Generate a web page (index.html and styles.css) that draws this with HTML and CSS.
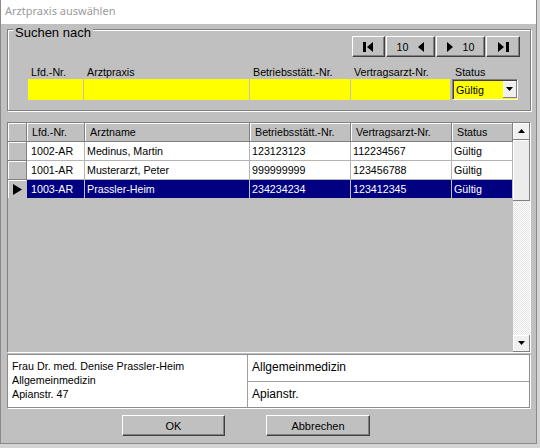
FILE: index.html
```html
<!DOCTYPE html>
<html lang="de">
<head>
<meta charset="utf-8">
<title>Arztpraxis auswählen</title>
<link rel="stylesheet" href="styles.css">
</head>
<body>
<div class="window">
  <div class="titlebar">Arztpraxis auswählen</div>
  <div class="content">
    <div class="groupbox">
      <span class="legend">Suchen nach</span>
      <div class="navrow">
        <div class="nbtn w-first">
          <svg width="11" height="10" viewBox="0 0 11 10"><rect x="0" y="0" width="3" height="10" fill="#000"/><polygon points="10,0 4,5 10,10" fill="#000"/></svg>
        </div>
        <div class="nbtn w-prev">
          <span>10</span>
          <svg width="6" height="10" viewBox="0 0 6 10"><polygon points="6,0 0,5 6,10" fill="#000"/></svg>
        </div>
        <div class="nbtn w-next">
          <svg width="6" height="10" viewBox="0 0 6 10"><polygon points="0,0 6,5 0,10" fill="#000"/></svg>
          <span>10</span>
        </div>
        <div class="nbtn w-last">
          <svg width="11" height="10" viewBox="0 0 11 10"><polygon points="0,0 6,5 0,10" fill="#000"/><rect x="8" y="0" width="3" height="10" fill="#000"/></svg>
        </div>
      </div>
      <div class="fields">
        <div class="fcol f-lfd"><div class="flabel">Lfd.-Nr.</div><div class="yfield"></div></div>
        <div class="fcol f-arzt"><div class="flabel">Arztpraxis</div><div class="yfield"></div></div>
        <div class="fcol f-betr"><div class="flabel">Betriebsstätt.-Nr.</div><div class="yfield"></div></div>
        <div class="fcol f-vert"><div class="flabel">Vertragsarzt-Nr.</div><div class="yfield"></div></div>
        <div class="fcol f-status"><div class="flabel">Status</div>
          <div class="combo"><span class="ctext">Gültig</span><span class="carrow"><svg width="7" height="4" viewBox="0 0 7 4"><polygon points="0,0 7,0 3.5,4" fill="#000"/></svg></span></div>
        </div>
      </div>
    </div>

    <div class="grid">
      <div class="gtable">
        <div class="grow ghead">
          <div class="gc c-ind ind"></div>
          <div class="gc c-lfd">Lfd.-Nr.</div>
          <div class="gc c-arzt">Arztname</div>
          <div class="gc c-betr">Betriebsstätt.-Nr.</div>
          <div class="gc c-vert">Vertragsarzt-Nr.</div>
          <div class="gc c-stat">Status</div>
        </div>
        <div class="grow gdata">
          <div class="gc c-ind ind"></div>
          <div class="gc c-lfd">1002-AR</div>
          <div class="gc c-arzt">Medinus, Martin</div>
          <div class="gc c-betr">123123123</div>
          <div class="gc c-vert">112234567</div>
          <div class="gc c-stat">Gültig</div>
        </div>
        <div class="grow gdata">
          <div class="gc c-ind ind"></div>
          <div class="gc c-lfd">1001-AR</div>
          <div class="gc c-arzt">Musterarzt, Peter</div>
          <div class="gc c-betr">999999999</div>
          <div class="gc c-vert">123456788</div>
          <div class="gc c-stat">Gültig</div>
        </div>
        <div class="grow gdata gsel">
          <div class="gc c-ind ind"><svg width="9" height="11" viewBox="0 0 9 11"><polygon points="0,0 9,5.5 0,11" fill="#000"/></svg></div>
          <div class="gc c-lfd">1003-AR</div>
          <div class="gc c-arzt">Prassler-Heim</div>
          <div class="gc c-betr">234234234</div>
          <div class="gc c-vert">123412345</div>
          <div class="gc c-stat">Gültig</div>
        </div>
      </div>
      <div class="vscroll">
        <div class="sbtn"><svg width="7" height="4" viewBox="0 0 7 4"><polygon points="3.5,0 7,4 0,4" fill="#000"/></svg></div>
        <div class="sthumb"></div>
        <div class="strack"></div>
        <div class="sbtn"><svg width="7" height="4" viewBox="0 0 7 4"><polygon points="0,0 7,0 3.5,4" fill="#000"/></svg></div>
      </div>
    </div>

    <div class="info">
      <div class="info-left">
        <div>Frau Dr. med. Denise Prassler-Heim</div>
        <div>Allgemeinmedizin</div>
        <div>Apianstr. 47</div>
      </div>
      <div class="info-right">
        <div class="info-cell">Allgemeinmedizin</div>
        <div class="info-cell">Apianstr.</div>
      </div>
    </div>

    <div class="buttons">
      <div class="btn b-ok">OK</div>
      <div class="btn b-cancel">Abbrechen</div>
    </div>
  </div>
</div>
</body>
</html>
```

FILE: styles.css
```css
* { box-sizing: border-box; }
html, body { margin: 0; padding: 0; }
body {
  width: 540px;
  height: 448px;
  overflow: hidden;
  background: #d4d4d4;
  font-family: "Liberation Sans", Arial, sans-serif;
  font-size: 10.7px;
  color: #000;
}
.window {
  width: 537px;
  height: 444px;
  background: #c0c0c0;
  border-left: 1px solid #8a8a8a;
  border-right: 1px solid #8a8a8a;
  border-bottom: 1px solid #8a8a8a;
}
.titlebar {
  height: 24px;
  background: #fff;
  color: #9a9a9a;
  font-family: "Noto Sans", "Open Sans", sans-serif;
  font-size: 11px;
  line-height: 22px;
  padding-left: 4px;
}
.content {
  padding: 5px 0 0 6px;
}

/* group box */
.groupbox {
  position: relative;
  width: 524px;
  height: 82px;
  border: 1px solid #808080;
  box-shadow: inset 1px 1px 0 #fff, 1px 1px 0 #fff;
  padding: 6px 10px 0 20px;
}
.legend {
  position: absolute;
  top: -5px;
  left: 5px;
  padding: 0 2px;
  background: #c0c0c0;
  font-size: 13px;
  line-height: 15px;
}
.navrow {
  display: flex;
  justify-content: flex-end;
  gap: 1px;
  height: 21px;
}
.nbtn {
  display: flex;
  align-items: center;
  justify-content: center;
  gap: 10px;
  height: 21px;
  background: #c0c0c0;
  border-top: 1px solid #fff;
  border-left: 1px solid #fff;
  border-right: 1px solid #404040;
  border-bottom: 1px solid #404040;
  box-shadow: inset -1px -1px 0 #808080;
  font-size: 10.7px;
}
.w-first { width: 33px; }
.w-prev { width: 49px; }
.w-next { width: 49px; }
.w-last { width: 34px; }

.fields {
  display: flex;
  margin-top: 9px;
}
.fcol { display: flex; flex-direction: column; }
.flabel {
  height: 13px;
  line-height: 13px;
  padding-left: 3px;
  white-space: nowrap;
}
.yfield {
  height: 21px;
  background: #ffff00;
}
.f-lfd { width: 55px; margin-right: 1px; }
.f-arzt { width: 165px; margin-right: 1px; }
.f-betr { width: 100px; margin-right: 1px; }
.f-vert { width: 99px; margin-right: 2px; }
.f-status { width: 66px; }
.combo {
  display: flex;
  height: 21px;
  background: #ffff00;
  border-top: 1px solid #808080;
  border-left: 1px solid #808080;
  border-right: 1px solid #fff;
  border-bottom: 1px solid #fff;
  box-shadow: inset 1px 1px 0 #404040;
}
.ctext {
  flex: 1;
  padding: 3px 0 0 3px;
  line-height: 14px;
}
.carrow {
  width: 14px;
  margin: 1px 0 1px 0;
  display: flex;
  align-items: center;
  justify-content: center;
  background: #f0f0f0;
  border-right: 1px solid #808080;
  border-bottom: 1px solid #808080;
  box-shadow: inset 1px 1px 0 #fff;
}

/* grid */
.grid {
  display: flex;
  width: 524px;
  height: 231px;
  margin-top: 11px;
  border-top: 1px solid #808080;
  border-left: 1px solid #808080;
  border-right: 1px solid #fff;
  border-bottom: 1px solid #fff;
}
.gtable {
  width: 505px;
  background: #c0c0c0;
}
.grow {
  display: flex;
  height: 19px;
}
.gc {
  height: 19px;
  line-height: 18px;
  padding-left: 2px;
  white-space: nowrap;
  overflow: hidden;
  border-right: 1px solid #b4b4b4;
  border-bottom: 1px solid #b4b4b4;
}
.c-ind { width: 19px; }
.c-lfd { width: 58px; }
.c-arzt { width: 165px; }
.c-betr { width: 101px; }
.c-vert { width: 101px; }
.c-stat { width: 61px; }
.gdata .gc { background: #fff; }
.gdata .c-lfd { padding-left: 4px; }
.ghead .gc {
  background: #c0c0c0;
  padding-left: 5px;
  border-right: 1px solid #808080;
  border-bottom: 1px solid #808080;
  box-shadow: inset 1px 1px 0 #fff;
}
.grow .ind {
  background: #c0c0c0;
  padding: 0;
  border-right: 1px solid #808080;
  border-bottom: 1px solid #808080;
  box-shadow: inset 1px 1px 0 #fff;
  display: flex;
  align-items: center;
  justify-content: center;
}
.gsel .gc {
  background: #000080;
  color: #fff;
  border-right-color: #c0c0c0;
  border-bottom-color: #c0c0c0;
}
.gsel .ind { background: #c0c0c0; }

.vscroll {
  width: 17px;
  display: flex;
  flex-direction: column;
}
.sbtn {
  height: 17px;
  display: flex;
  align-items: center;
  justify-content: center;
  background: #f0f0f0;
  border-right: 1px solid #808080;
  border-bottom: 1px solid #808080;
  box-shadow: inset 1px 1px 0 #fff;
}
.sthumb {
  height: 61px;
  background: #ececec;
  border-right: 1px solid #808080;
  border-bottom: 1px solid #808080;
  box-shadow: inset 1px 1px 0 #fff;
}
.strack {
  flex: 1;
  background: repeating-conic-gradient(#ffffff 0 25%, #e4e4e4 0 50%) 0 0 / 2px 2px;
}

/* info panel */
.info {
  display: flex;
  width: 523px;
  height: 54px;
  margin-top: 1px;
  background: #fff;
  border: 1px solid #8c8c8c;
  box-shadow: 1px 1px 0 #fff;
}
.info-left {
  width: 240px;
  padding: 4px 0 0 4px;
  line-height: 14px;
  border-right: 1px solid #a0a0a0;
}
.info-right {
  flex: 1;
  display: flex;
  flex-direction: column;
}
.info-cell {
  flex: 1;
  font-size: 12px;
  line-height: 24px;
  padding-left: 4px;
  border-bottom: 1px solid #a0a0a0;
}
.info-cell + .info-cell { border-bottom: none; }

/* buttons */
.buttons {
  display: flex;
  gap: 41px;
  margin-top: 7px;
  padding-left: 115px;
}
.btn {
  height: 21px;
  display: flex;
  align-items: center;
  justify-content: center;
  font-size: 11px;
  background: #c0c0c0;
  border-top: 1px solid #fff;
  border-left: 1px solid #fff;
  border-right: 1px solid #404040;
  border-bottom: 1px solid #404040;
  box-shadow: inset -1px -1px 0 #808080;
}
.b-ok { width: 103px; }
.b-cancel { width: 104px; }
```
